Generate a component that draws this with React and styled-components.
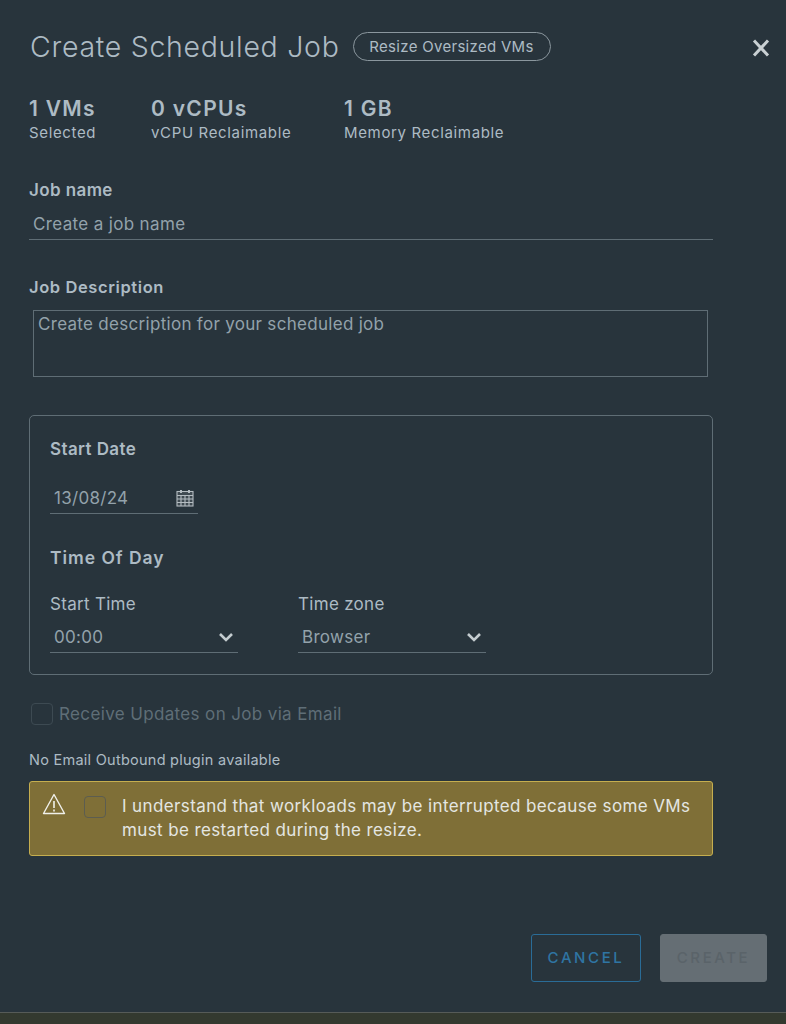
import React from 'react'
import styled, { createGlobalStyle } from 'styled-components'

const GlobalStyle = createGlobalStyle`
  html, body { margin: 0; padding: 0; background: #33392f; }
  * { box-sizing: border-box; }
  body { font-family: Inter, "Liberation Sans", sans-serif; color: #adbbc4; }
`

const Modal = styled.div`
  width: 786px;
  height: 1013px;
  background: #28343c;
  border-bottom: 1px solid #565b58;
  padding: 30px 0 0 29px;
  display: flex;
  flex-direction: column;
  overflow: hidden;
`

const Header = styled.div`
  display: flex;
  align-items: center;
  height: 33px;
  position: relative;
`

const Title = styled.h1`
  margin: 0 0 0 1px;
  font-size: 28.5px;
  font-weight: 300;
  color: #adbbc4;
  letter-spacing: 0.7px;
`

const Pill = styled.span`
  margin-left: 13px;
  height: 29px;
  width: 198px;
  border: 1px solid #8b979e;
  border-radius: 15px;
  font-size: 15px;
  letter-spacing: 0.3px;
  color: #adbbc4;
  display: flex;
  align-items: center;
  justify-content: center;
`

const Close = styled.button`
  position: absolute;
  right: 14px;
  top: 7px;
  width: 22px;
  height: 22px;
  padding: 0;
  border: 0;
  background: none;
  display: flex;
`

const Stats = styled.div`
  display: flex;
  margin-top: 33px;
`

const Stat = styled.div`
  width: ${p => p.$width}px;
`

const StatValue = styled.div`
  font-size: 21px;
  font-weight: 600;
  line-height: 26px;
  letter-spacing: 1.3px;
  color: #adbbc4;
`

const StatLabel = styled.div`
  font-size: 15px;
  line-height: 18px;
  letter-spacing: 0.65px;
  margin-top: 2px;
  color: #adbbc4;
`

const Form = styled.div`
  width: 684px;
  display: flex;
  flex-direction: column;
`

const FieldLabel = styled.label`
  display: block;
  font-size: ${p => p.$size || 17}px;
  font-weight: 600;
  line-height: 20px;
  letter-spacing: ${p => p.$track || 0.4}px;
  color: #adbbc4;
`

const NameLabel = styled(FieldLabel)`
  margin-top: 38px;
`

const DescLabel = styled(FieldLabel)`
  margin-top: 37px;
`

const NameInput = styled.div`
  height: 30px;
  margin-top: 10px;
  padding: 0 4px;
  border-bottom: 1px solid #5f6d75;
  font-size: 17px;
  letter-spacing: 0.35px;
  line-height: 29px;
  color: #93a2ab;
`

const DescInput = styled.div`
  width: 675px;
  height: 67px;
  margin: 13px 0 0 4px;
  padding: 3px 4px;
  border: 1px solid #5f6d75;
  font-size: 17px;
  letter-spacing: 0.3px;
  line-height: 20px;
  color: #93a2ab;
`

const Schedule = styled.section`
  height: 260px;
  margin-top: 38px;
  padding: 23px 20px 0;
  border: 1px solid #5f6d75;
  border-radius: 5px;
`

const UnderlinedField = styled.div`
  width: ${p => p.$width}px;
  height: 31px;
  padding: 0 4px 1px;
  border-bottom: 1px solid #5f6d75;
  display: flex;
  align-items: center;
  justify-content: space-between;
  font-size: 17px;
  letter-spacing: 0.3px;
  color: #93a2ab;
`

const DateField = styled(UnderlinedField)`
  margin-top: 24px;
`

const SectionLabel = styled(FieldLabel)`
  margin-top: 34px;
`

const TimeRow = styled.div`
  display: flex;
  gap: 60px;
  margin-top: 26px;
`

const SmallLabel = styled.div`
  font-size: 17px;
  letter-spacing: 0.3px;
  line-height: 20px;
  color: #adbbc4;
  margin-bottom: 8px;
`

const Checkbox = styled.span`
  flex: none;
  width: 22px;
  height: 22px;
  border-radius: 4px;
  border: 1px solid ${p => p.$border};
`

const EmailRow = styled.div`
  display: flex;
  align-items: center;
  gap: 6px;
  margin: 28px 0 0 2px;
  font-size: 17px;
  letter-spacing: 0.36px;
  color: #5f6e77;
`

const Hint = styled.p`
  margin: 26px 0 0;
  font-size: 14.5px;
  letter-spacing: 0.26px;
  line-height: 18px;
  color: #adbbc4;
`

const Warning = styled.div`
  height: 75px;
  margin-top: 12px;
  padding: 10px 12px;
  display: flex;
  align-items: flex-start;
  background: #7f6f37;
  border: 1px solid #c5ae4f;
  border-radius: 3px;
`

const WarningText = styled.p`
  margin: 2px 0 0 16px;
  width: 575px;
  font-size: 17px;
  letter-spacing: 0.38px;
  line-height: 24px;
  color: #e4e6e2;
`

const Boxed = styled(Checkbox)`
  margin: 4px 0 0 18px;
`

const Footer = styled.div`
  display: flex;
  justify-content: flex-end;
  gap: 19px;
  margin: 78px 19px 0 0;
`

const Button = styled.button`
  width: ${p => p.$width}px;
  height: 48px;
  border-radius: 3px;
  font-family: Inter, "Liberation Sans", sans-serif;
  font-size: 15px;
  font-weight: 500;
  letter-spacing: 2.6px;
  padding: 0 0 2px;
`

const Cancel = styled(Button)`
  background: transparent;
  border: 1px solid #2a6c97;
  color: #2f75a3;
`

const Create = styled(Button)`
  background: #656e74;
  border: 1px solid #656e74;
  color: #5a6369;
`

const WarningGlyph = styled.svg`
  flex: none;
`

function Chevron() {
  return (
    <svg width="16" height="10" viewBox="0 0 16 10" fill="none">
      <path d="M2 2l6 6 6-6" stroke="#c4ccd0" strokeWidth="2.6" />
    </svg>
  )
}

function CalendarIcon() {
  return (
    <svg width="18" height="18" viewBox="0 0 18 18" fill="none" stroke="#b4bcc1" strokeWidth="1.1">
      <rect x="1" y="2.5" width="16" height="14.5" fill="#3f4a51" />
      <path d="M1 6.5h16M1 10h16M1 13.5h16M5 6.5V17M9 6.5V17M13 6.5V17" />
      <path d="M5 1v3M13 1v3" strokeWidth="2" />
    </svg>
  )
}

function WarningIcon() {
  return (
    <WarningGlyph width="24" height="24" viewBox="0 0 24 24" fill="none" stroke="#f0f0ea" strokeWidth="1.4">
      <path d="M12 2.5L22.5 21.5H1.5Z" strokeLinejoin="round" />
      <path d="M12 9v7M12 17.5v2" strokeWidth="1.6" />
    </WarningGlyph>
  )
}

export default function App() {
  return (
    <>
      <GlobalStyle />
      <Modal>
        <Header>
          <Title>Create Scheduled Job</Title>
          <Pill>Resize Oversized VMs</Pill>
          <Close aria-label="Close">
            <svg width="22" height="22" viewBox="0 0 22 22" fill="none">
              <path d="M4 3.5l14 15M18 3.5l-14 15" stroke="#c9d0d3" strokeWidth="3" />
            </svg>
          </Close>
        </Header>
        <Stats>
          <Stat $width={122}>
            <StatValue>1 VMs</StatValue>
            <StatLabel>Selected</StatLabel>
          </Stat>
          <Stat $width={193}>
            <StatValue>0 vCPUs</StatValue>
            <StatLabel>vCPU Reclaimable</StatLabel>
          </Stat>
          <Stat $width={200}>
            <StatValue>1 GB</StatValue>
            <StatLabel>Memory Reclaimable</StatLabel>
          </Stat>
        </Stats>
        <Form>
          <NameLabel>Job name</NameLabel>
          <NameInput>Create a job name</NameInput>
          <DescLabel $size={16.5} $track={0.6}>Job Description</DescLabel>
          <DescInput>Create description for your scheduled job</DescInput>
          <Schedule>
            <FieldLabel>Start Date</FieldLabel>
            <DateField $width={148}>
              13/08/24
              <CalendarIcon />
            </DateField>
            <SectionLabel $size={17.5} $track={0.95}>Time Of Day</SectionLabel>
            <TimeRow>
              <div>
                <SmallLabel>Start Time</SmallLabel>
                <UnderlinedField $width={188}>
                  00:00
                  <Chevron />
                </UnderlinedField>
              </div>
              <div>
                <SmallLabel>Time zone</SmallLabel>
                <UnderlinedField $width={188}>
                  Browser
                  <Chevron />
                </UnderlinedField>
              </div>
            </TimeRow>
          </Schedule>
          <EmailRow>
            <Checkbox $border="#3d4a52" />
            Receive Updates on Job via Email
          </EmailRow>
          <Hint>No Email Outbound plugin available</Hint>
          <Warning>
            <WarningIcon />
            <Boxed $border="#5c5d50" />
            <WarningText>
              I understand that workloads may be interrupted because some VMs must be restarted during the resize.
            </WarningText>
          </Warning>
        </Form>
        <Footer>
          <Cancel $width={110}>CANCEL</Cancel>
          <Create $width={107}>CREATE</Create>
        </Footer>
      </Modal>
    </>
  )
}
